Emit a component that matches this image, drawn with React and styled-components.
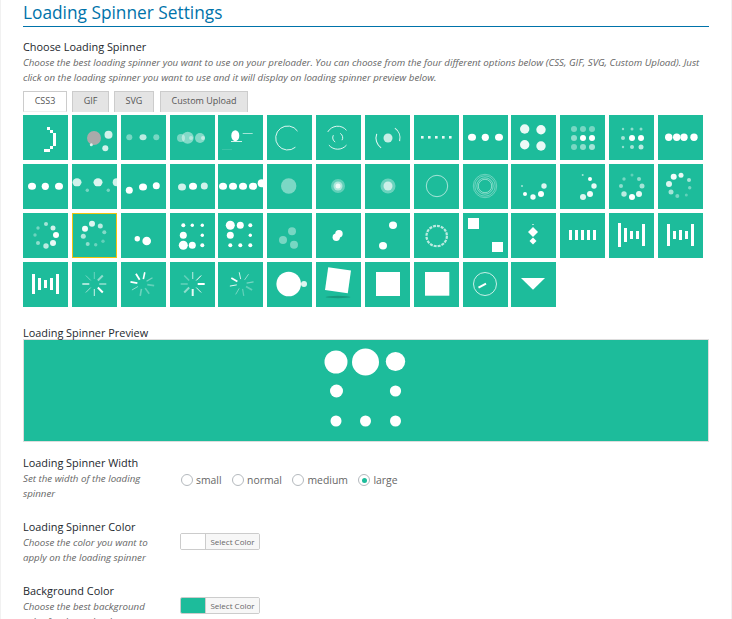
import React from 'react'
import styled, { createGlobalStyle } from 'styled-components'

const TEAL = '#1dbc9b'

const GlobalStyle = createGlobalStyle`
  html, body { margin: 0; padding: 0; height: 100%; overflow: hidden; background: #f1f1f1; }
  body { font-family: "Open Sans", "Liberation Sans", sans-serif; color: #222; }
`

const Panel = styled.div`
  margin: 0 1px;
  padding: 0 22px;
  background: #fff;
  height: 619px;
  overflow: hidden;
`
const Title = styled.h2`
  margin: 0 0 12px;
  height: 26px;
  font-size: 17.3px;
  line-height: 26px;
  font-weight: 400;
  color: #0073aa;
  border-bottom: 1px solid #0073aa;
`
const Label = styled.div`
  margin-bottom: 1px;
  font-size: 10.9px;
  line-height: 15px;
  font-weight: 500;
  color: #23282d;
`
const Desc = styled.p`
  margin: 0;
  font-size: 9.73px;
  line-height: 15px;
  font-style: italic;
  color: #666;
`
const Tabs = styled.div`
  display: flex;
  margin: 6px 0 3px;
  height: 21px;
`
const Tab = styled.div`
  box-sizing: border-box;
  width: ${p => p.$w}px;
  margin-right: ${p => p.$mr}px;
  text-align: center;
  font-size: 9px;
  line-height: 18px;
  color: #555;
  background: ${p => (p.$active ? '#fff' : '#e4e4e4')};
  border: 1px solid #ccc;
  border-bottom: ${p => (p.$active ? '1px solid #eee' : 'none')};
`
const Grid = styled.div`
  display: grid;
  grid-template-columns: repeat(14, 45px);
  grid-auto-rows: 45px;
  column-gap: 3.85px;
  row-gap: 4px;
`
const Tile = styled.div`
  box-sizing: border-box;
  width: 45px;
  height: 45px;
  background: ${TEAL};
  outline: ${p => (p.$selected ? '1px solid #f1c40f' : 'none')};
  outline-offset: -1px;
  svg { display: block; }
`
const PreviewLabel = styled(Label)`
  margin-top: 20px;
  margin-bottom: 0;
  font-weight: 400;
  line-height: 12px;
`
const Preview = styled.div`
  box-sizing: border-box;
  height: 103px;
  background: ${TEAL};
  border: 1px solid #ddd;
  display: flex;
  align-items: center;
  justify-content: center;
`
const Rows = styled.div`
  margin-top: 13px;
`
const Row = styled.div`
  display: flex;
  height: 64px;
`
const RowHead = styled.div`
  width: 157px;
  box-sizing: border-box;
  padding-right: 25px;
  flex: none;
`
const RadioGroup = styled.div`
  display: flex;
  align-items: center;
  height: 12px;
  margin-top: 19px;
  margin-left: 1px;
`
const RadioItem = styled.label`
  display: flex;
  align-items: center;
  margin-right: 10.5px;
  font-size: 10.4px;
  color: #666;
`
const RadioDot = styled.span`
  box-sizing: border-box;
  width: 12px;
  height: 12px;
  margin-right: 3px;
  border: 1px solid #b4b9be;
  border-radius: 50%;
  background: #fff;
  display: flex;
  align-items: center;
  justify-content: center;
  &::before {
    content: '';
    display: ${p => (p.$on ? 'block' : 'none')};
    width: 5px;
    height: 5px;
    border-radius: 50%;
    background: ${TEAL};
  }
`
const Picker = styled.div`
  display: flex;
  box-sizing: border-box;
  width: 80px;
  height: 17px;
  margin-top: 14px;
  border: 1px solid #ccc;
  border-radius: 2px;
  overflow: hidden;
`
const Swatch = styled.div`
  width: 24px;
  background: ${p => p.$color};
  border-right: 1px solid #ccc;
`
const PickerLabel = styled.div`
  flex: 1;
  background: #f7f7f7;
  font-size: 8px;
  line-height: 15px;
  text-align: center;
  color: #666;
`

// spinner drawing helpers, all in the 45x45 space of a tile
const dots = list => list.map(([x, y, rx, o = 1, ry], i) => (
  <ellipse key={i} cx={x} cy={y} rx={rx} ry={ry || rx} fill="#fff" opacity={o} />
))
const bars = list => list.map(([x, y, w, h, o = 1], i) => (
  <rect key={i} x={x} y={y} width={w} height={h} fill="#fff" opacity={o} />
))
const arc = (cx, cy, r, a0, a1, sw = 1, o = 0.85) => {
  const p = a => [cx + r * Math.cos((a * Math.PI) / 180), cy + r * Math.sin((a * Math.PI) / 180)]
  const [x0, y0] = p(a0)
  const [x1, y1] = p(a1)
  const large = a1 - a0 > 180 ? 1 : 0
  return (
    <path
      key={`${cx}${r}${a0}`}
      d={`M${x0} ${y0}A${r} ${r} 0 ${large} 1 ${x1} ${y1}`}
      fill="none"
      stroke="#fff"
      strokeWidth={sw}
      opacity={o}
    />
  )
}
const ring = (cx, cy, r, sw = 1, o = 0.6, dash) => (
  <circle key={r} cx={cx} cy={cy} r={r} fill="none" stroke="#fff" strokeWidth={sw} opacity={o} strokeDasharray={dash} />
)
// [angle clockwise from top, stroke width, opacity]
const spokes = (cx, cy, list, r0 = 5, r1 = 12) => list.map(([a, w, o], i) => {
  const s = Math.sin((a * Math.PI) / 180)
  const c = -Math.cos((a * Math.PI) / 180)
  return (
    <line key={i} x1={cx + s * r0} y1={cy + c * r0} x2={cx + s * r1} y2={cy + c * r1} stroke="#fff" strokeWidth={w} opacity={o} />
  )
})

const spinners = [
  bars([[24, 12, 3, 3], [27, 15, 3, 3], [30, 18, 3, 13], [27, 31, 3, 3], [21, 34, 6, 3]]),
  <>
    <circle cx="22" cy="23" r="7" fill="#aaa" />
    {dots([[36.5, 19.7, 4, 0.8], [33.3, 33.3, 3, 0.8], [19.3, 29.7, 1.5, 0.8]])}
  </>,
  dots([[8.3, 22.3, 3, 0.4], [22, 22.3, 3.5, 0.7, 3], [35.3, 22.3, 3, 0.4]]),
  dots([[11, 23, 4, 0.4], [17.7, 22.7, 6, 0.45], [21, 23, 2, 0.4], [30, 23, 5, 0.45], [33, 23, 2, 0.5]]),
  <>
    {dots([[17.3, 20.7, 4, 1, 5.5]])}
    {bars([[13, 26, 11, 0.8], [24.7, 18, 10, 0.7, 0.85], [4, 34, 10, 0.5, 0.25]])}
  </>,
  arc(20.7, 23, 12, 50, 325, 1),
  <>
    {arc(21.7, 22.7, 11.5, -150, -40, 1)}
    {arc(21.7, 22.7, 11.5, 40, 140, 1)}
    {arc(21.7, 22.7, 5, -60, 30, 1)}
    {arc(21.7, 22.7, 5, 120, 210, 1)}
  </>,
  <>
    {dots([[23, 23, 4.5, 0.75]])}
    {arc(23, 23, 12, -55, 15, 1.1)}
    {arc(23, 23, 12, 125, 200, 1.1)}
  </>,
  bars([[7, 21, 2.6, 2.6, 0.9], [14, 21, 2.6, 2.6, 0.9], [21, 21, 2.6, 2.6, 0.9], [28, 21, 2.6, 2.6, 0.9], [35, 21, 2.6, 2.6, 0.9]]),
  dots([[9, 22.3, 4, 1, 3.5], [22.3, 22.3, 3.6], [36, 22.3, 4, 1, 3.5]]),
  dots([[13.7, 14, 4.7, 0.9], [30, 14.7, 4.7, 0.93], [13.7, 29.7, 4.7, 0.93], [30, 31, 4.7, 0.9]]),
  dots([[14, 14, 3, 0.4], [23, 14, 3, 0.4], [32, 14, 3, 0.4], [14, 23, 3, 0.5], [23, 23, 3], [32, 23, 3], [14, 32, 3, 0.4], [23, 32, 3, 0.5], [32, 32, 3, 0.6]]),
  dots([[14, 14, 1.2, 0.5], [23, 14, 1.5, 0.5], [32, 14, 1.5, 0.5], [14, 23, 2, 0.6], [23, 23, 3], [32, 23, 3], [14, 32, 1.2, 0.5], [23, 32, 2, 0.6], [32, 32, 2.5, 0.7]]),
  dots([[10.7, 22.3, 3.7], [18.7, 22.3, 3.7], [26, 22.3, 3.7], [36, 22.3, 3.7]]),

  dots([[9, 22.3, 4, 1, 3.5], [22.3, 22.3, 3.6], [36, 22.3, 4, 1, 3.5]]),
  dots([[5, 18.3, 4.5, 0.8, 4], [26, 18.3, 4.5, 0.85, 4], [44.7, 18.3, 4, 0.8], [15.3, 26.3, 1.7, 0.4], [36.3, 26.3, 1.7, 0.4]]),
  dots([[8.3, 26.3, 3.5], [22, 23, 4, 1, 3.5], [35.3, 21.7, 3.5]]),
  dots([[12, 23, 4, 0.8, 3.5], [23, 22.3, 4, 1, 3.5], [34.3, 22, 3.5, 0.8]]),
  dots([[5, 22.3, 4, 1, 3.5], [15, 22.3, 4, 1, 3.5], [25, 22.3, 4, 1, 3.5], [35, 22.3, 4, 1, 3.5], [43.7, 19.3, 4]]),
  dots([[21.7, 22, 7.7, 0.42]]),
  dots([[22, 22, 7, 0.3], [22, 22, 4.5, 0.5], [22, 22, 2.5, 0.8]]),
  dots([[23, 22, 7.5, 0.35], [23, 22, 4.5, 0.65]]),
  ring(23, 22, 10.7, 1, 0.6),
  <>
    {ring(22, 22, 11.7, 0.7, 0.5)}
    {ring(22, 22, 10.2, 0.7, 0.5)}
    {ring(22, 22, 8.2, 0.7, 0.6)}
    {ring(22, 22, 6.7, 0.7, 0.7)}
  </>,
  dots([[33, 22, 2.7, 0.85], [30, 30, 3], [22, 33, 2.7, 0.95], [14, 30, 2], [11, 22, 1, 0.6]]),
  dots([[22.7, 11, 1, 0.6], [30, 15, 2], [34, 22, 2.7, 0.9], [30, 30, 3, 0.95], [23, 33, 3, 0.85]]),
  dots([[23, 11, 1.5, 0.3], [30, 15, 2, 0.5], [33, 22, 2.5, 0.6], [30, 30, 3, 0.9], [23, 33, 3], [15, 30, 2.7, 0.7], [12, 22, 2, 0.5], [15, 15, 1.7, 0.4]]),
  dots([[23, 11.3, 2.5, 0.9], [31, 16, 2, 0.6], [31.7, 23.7, 1.7, 0.4], [28.3, 31, 1.5, 0.3], [19.3, 32, 2, 0.4], [13, 28, 2.5, 0.6], [11, 20, 3, 0.85], [15.7, 12.7, 3, 0.95]]),

  dots([[23, 11, 2, 0.6], [30, 15, 2.5, 0.8], [33, 22, 3], [30, 30, 3, 0.9], [23, 33, 2.7, 0.7], [15, 30, 2, 0.5], [12, 22, 1.7, 0.35], [15, 15, 1.7, 0.4]]),
  dots([[20, 10.7, 3, 0.85], [28.3, 13, 2.5, 0.7], [32.3, 19.3, 2, 0.45], [31, 28.3, 1.7, 0.3], [23.7, 31.7, 1.7, 0.35], [15.7, 31, 2, 0.5], [11.3, 23.3, 2.5, 0.65], [13, 15.7, 3, 0.95]]),
  dots([[16.3, 25.7, 2.7], [25.7, 28, 4.3]]),
  dots([[13.3, 12.3, 2], [22.3, 12.3, 1.7], [32.3, 12.3, 1.7], [13.3, 22.3, 3.5], [32.3, 22.3, 1.7], [13.3, 32.3, 4.5], [22.3, 32.3, 3.5], [32.3, 32.3, 2]]),
  dots([[12.3, 12.3, 4.5], [22.3, 12.3, 3.5], [32.3, 12.3, 2], [12.3, 22.3, 3.5], [32.3, 22.3, 1.7], [12.3, 32.3, 2], [22.3, 32.3, 2], [32.3, 32.3, 2]]),
  dots([[25, 18.3, 4, 0.4], [16, 27, 4, 0.4], [27, 31.7, 4, 0.4]]),
  dots([[23, 20.8, 3.7], [20.3, 24.3, 3.7]]),
  dots([[28, 12.3, 4, 1, 3.7], [18, 32.7, 4, 1, 3.7]]),
  ring(22.7, 23, 10.2, 2.2, 0.7, '3 1'),
  bars([[5, 5, 11, 11], [29, 29, 11, 10]]),
  <>
    <polygon points="22,14 27,19 22,24 17,19" fill="#fff" />
    <polygon points="22,24.5 25.5,28 22,31.5 18.5,28" fill="#fff" />
    <rect x="21" y="11" width="2" height="1" fill="#fff" opacity="0.6" />
  </>,
  bars([[9, 17, 3, 10], [15, 17, 3, 10], [21, 17, 3, 10], [27, 17, 3, 10], [33, 17, 3, 10]]),
  bars([[9, 10, 3, 24], [15, 15, 3, 14], [21, 18, 3, 8], [27, 18, 3, 8], [33, 11, 3, 22]]),
  bars([[9, 11, 3, 22], [15, 18, 3, 8], [21, 17, 3, 10], [27, 18, 3, 8], [33, 11, 3, 22]]),

  bars([[9, 12, 3, 20], [15, 16, 3, 12], [21, 18, 3, 8], [27, 16, 3, 12], [33, 12, 3, 20]]),
  spokes(22.3, 22, [[0, 0.7, 0.5], [45, 2, 0.5], [90, 0.8, 1], [135, 2, 1], [180, 0.8, 1], [225, 0.8, 0.7], [270, 2, 0.6], [315, 0.8, 0.5]]),
  spokes(21.3, 22, [[12, 1.6, 1], [58, 1.2, 0.4], [98, 1.8, 0.3], [145, 1.6, 0.3], [190, 1.6, 0.35], [240, 1, 0.5], [280, 1.8, 1], [328, 1.8, 1]]),
  spokes(22.7, 22, [[0, 1.2, 0.6], [45, 1, 1], [90, 2, 1], [135, 1, 0.85], [180, 2, 0.9], [225, 2, 0.5], [270, 1.6, 0.3], [315, 1.6, 0.3]]),
  spokes(23.7, 22, [[348, 0.9, 0.9], [35, 1, 0.5], [80, 1.2, 0.4], [120, 1.8, 0.3], [170, 1.2, 0.3], [210, 1, 0.4], [260, 0.9, 1], [300, 1.8, 1]]),
  dots([[21.7, 22, 12.3], [37, 22, 3, 0.85]]),
  <>
    <rect x="10.5" y="6.8" width="23" height="23" fill="#fff" transform="rotate(8 22 18.3)" />
    <ellipse cx="22" cy="35" rx="12.5" ry="1.2" fill="#000" opacity="0.18" />
  </>,
  bars([[11, 10, 24, 24]]),
  bars([[11, 10, 24.3, 23.7]]),
  <>
    {ring(22, 22, 11.5, 0.8, 0.95)}
    <line x1="15.5" y1="25.7" x2="23" y2="21.7" stroke="#fff" strokeWidth="2" />
  </>,
  <polygon points="10,16 34,16 22,27.7" fill="#fff" />,
]

const SELECTED = 29

const preview = dots([
  [-30, -29, 11.5], [-0.5, -29, 13.5], [29.5, -29.5, 9.7, 1, 9.5],
  [-29.5, 0, 6.5], [29.5, 0, 5.6],
  [-30, 30, 5.5], [-0.5, 30, 5.5], [29.5, 30, 5.5],
])

const radios = [['small'], ['normal'], ['medium'], ['large', true]]

const App = () => (
  <>
    <GlobalStyle />
    <Panel>
      <Title>Loading Spinner Settings</Title>
      <Label>Choose Loading Spinner</Label>
      <Desc>
        Choose the best loading spinner you want to use on your preloader. You can choose from the four different options below (CSS, GIF, SVG, Custom Upload). Just click on the loading spinner you want to use and it will display on loading spinner preview below.
      </Desc>
      <Tabs>
        <Tab $active $w={44} $mr={5}>CSS3</Tab>
        <Tab $w={37} $mr={5}>GIF</Tab>
        <Tab $w={40} $mr={6}>SVG</Tab>
        <Tab $w={88} $mr={0}>Custom Upload</Tab>
      </Tabs>
      <Grid>
        {spinners.map((s, i) => (
          <Tile key={i} $selected={i === SELECTED}>
            <svg width="45" height="45" viewBox="0 0 45 45">{s}</svg>
          </Tile>
        ))}
      </Grid>
      <PreviewLabel>Loading Spinner Preview</PreviewLabel>
      <Preview>
        <svg width="90" height="90" viewBox="-45 -45 90 90">{preview}</svg>
      </Preview>
      <Rows>
        <Row>
          <RowHead>
            <Label>Loading Spinner Width</Label>
            <Desc>Set the width of the loading spinner</Desc>
          </RowHead>
          <RadioGroup>
            {radios.map(([name, on]) => (
              <RadioItem key={name}><RadioDot $on={on} />{name}</RadioItem>
            ))}
          </RadioGroup>
        </Row>
        <Row>
          <RowHead>
            <Label>Loading Spinner Color</Label>
            <Desc>Choose the color you want to apply on the loading spinner</Desc>
          </RowHead>
          <Picker><Swatch $color="#fff" /><PickerLabel>Select Color</PickerLabel></Picker>
        </Row>
        <Row>
          <RowHead>
            <Label>Background Color</Label>
            <Desc>Choose the best background color for the preloader</Desc>
          </RowHead>
          <Picker><Swatch $color={TEAL} /><PickerLabel>Select Color</PickerLabel></Picker>
        </Row>
      </Rows>
    </Panel>
  </>
)

export default App
